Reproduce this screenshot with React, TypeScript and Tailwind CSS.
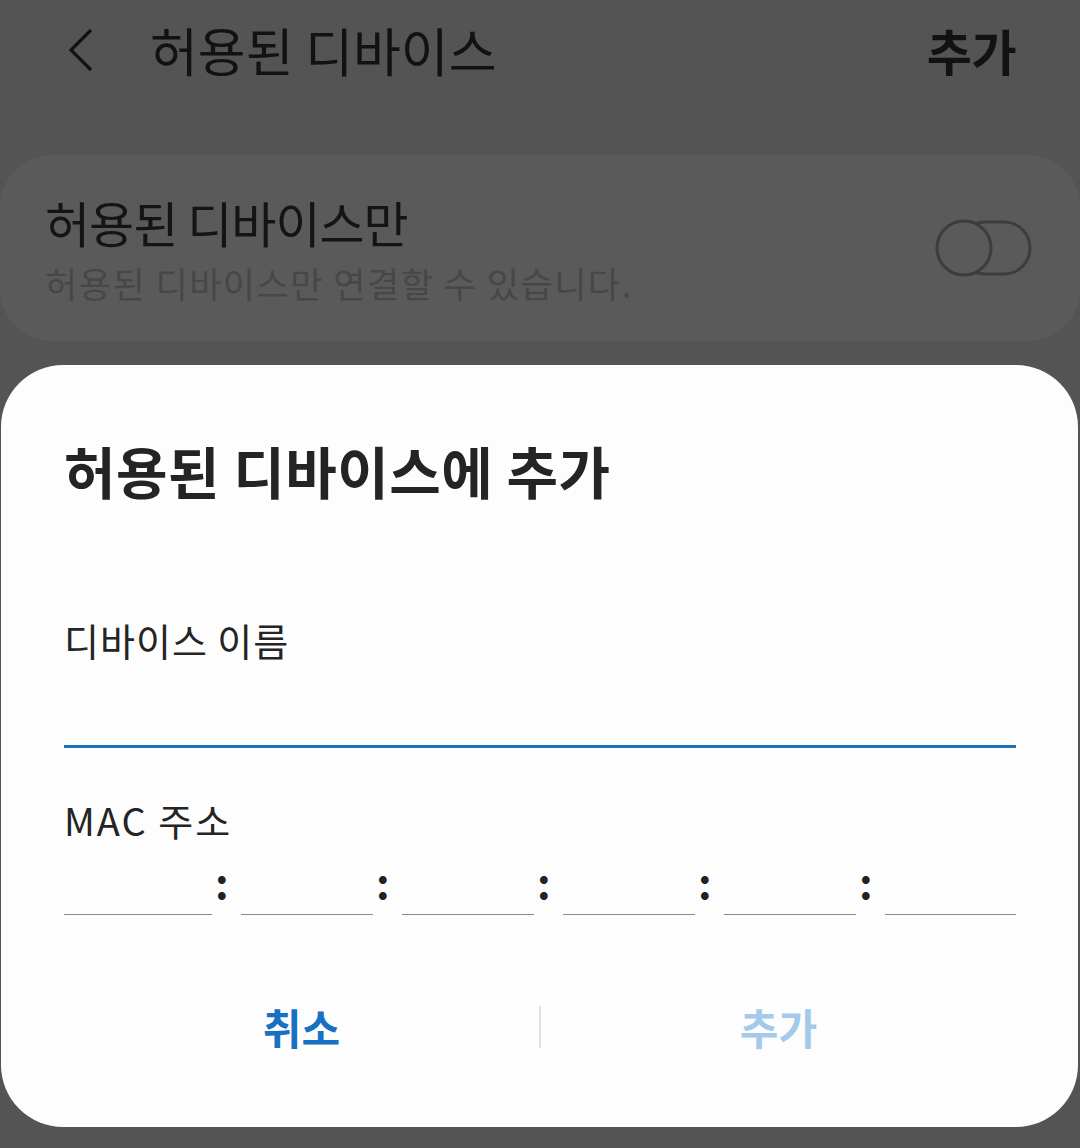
import React from "react";

const font = { fontFamily: '"Noto Sans CJK KR", "Noto Sans", sans-serif' };

function Toggle() {
	return (
		<svg width="98" height="60" viewBox="0 0 98 60" fill="none">
			<rect x="24" y="4" width="71" height="52" rx="26" stroke="#3d3d3d" strokeWidth="3" />
			<circle cx="29" cy="30" r="27" fill="#5a5a5a" stroke="#3d3d3d" strokeWidth="3" />
		</svg>
	);
}

function Colon() {
	return (
		<div className="w-[29px] h-full flex items-end pl-[3px] pb-[8px]">
			<span className="text-[42px] leading-[52px] text-[#222] font-semibold">:</span>
		</div>
	);
}

function MacField({ width }: { width: string }) {
	return <div className={`${width} h-full border-b-[1.5px] border-[#8a8a8a]`} />;
}

export default function App() {
	return (
		<div className="w-[1080px] h-[1148px] bg-[#545454] overflow-hidden" style={font}>
			{/* Header */}
			<div className="h-[100px] flex items-center pl-[66px] pr-[64px]">
				<svg width="30" height="46" viewBox="0 0 30 46" fill="none">
					<path d="M25 3 L5 23 L25 43" stroke="#121212" strokeWidth="3.2" />
				</svg>
				<span className="ml-[54px] text-[52px] leading-[64px] text-[#121212]">
					허용된 디바이스
				</span>
				<span className="ml-auto text-[49px] leading-[64px] font-bold text-[#121212] tracking-[-0.5px]">
					추가
				</span>
			</div>

			{/* Allowed devices only */}
			<div className="mt-[55px] h-[186px] rounded-[52px] bg-[#5a5a5a] flex items-center justify-between pl-[45px] pr-[47px]">
				<div className="flex flex-col">
					<span className="text-[49px] leading-[56px] text-[#141414] tracking-[-1px]">
						허용된 디바이스만
					</span>
					<span className="mt-[13px] text-[35px] leading-[40px] text-[#474747] tracking-[1.5px]">
						허용된 디바이스만 연결할 수 있습니다.
					</span>
				</div>
				<Toggle />
			</div>

			{/* Dialog */}
			<div className="mt-[24px] ml-[1px] w-[1077px] h-[762px] rounded-[62px] bg-[#fdfdfd] pl-[63px] pr-[62px] pt-[73px] flex flex-col">
				<span className="text-[56px] leading-[64px] font-bold text-[#242424] tracking-[0.5px]">
					허용된 디바이스에 추가
				</span>

				<span className="mt-[116px] text-[38px] leading-[44px] text-[#242424] tracking-[1px]">
					디바이스 이름
				</span>
				<div className="mt-[83px] h-[3px] bg-[#1f73b9]" />

				<span className="mt-[50px] text-[38px] leading-[44px] text-[#242424] tracking-[2px]">
					MAC 주소
				</span>
				<div className="h-[73px] flex items-end">
					<MacField width="w-[148px]" />
					<Colon />
					<MacField width="w-[132px]" />
					<Colon />
					<MacField width="w-[132px]" />
					<Colon />
					<MacField width="w-[132px]" />
					<Colon />
					<MacField width="w-[132px]" />
					<Colon />
					<MacField width="w-[131px]" />
				</div>

				<div className="mt-[67px] h-[90px] flex items-center">
					<div className="flex-1 flex justify-center">
						<span className="text-[42px] leading-[48px] font-bold text-[#1870c2]">
							취소
						</span>
					</div>
					<div className="w-[2px] h-[42px] bg-[#e2e2e2]" />
					<div className="flex-1 flex justify-center">
						<span className="text-[42px] leading-[48px] font-bold text-[#a5c9ea]">
							추가
						</span>
					</div>
				</div>
			</div>
		</div>
	);
}
